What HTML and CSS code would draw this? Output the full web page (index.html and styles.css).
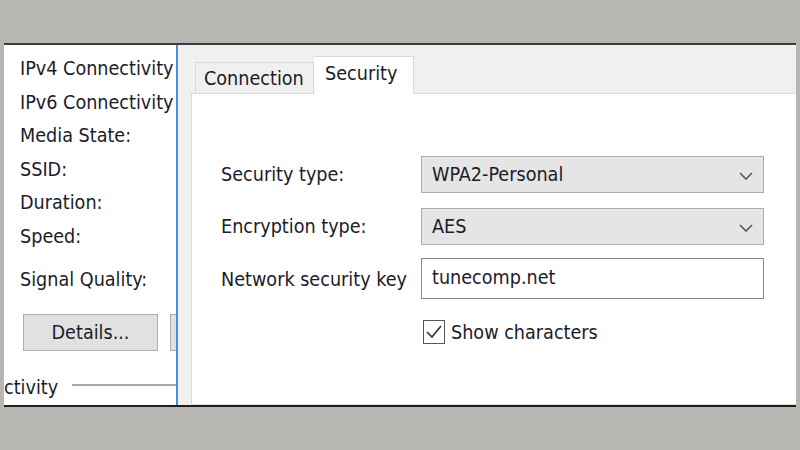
FILE: index.html
```html
<!DOCTYPE html>
<html>
<head>
<meta charset="utf-8">
<link rel="stylesheet" href="styles.css">
</head>
<body>
<div class="frame">
  <div class="left">
    <div class="row">IPv4 Connectivity</div>
    <div class="row">IPv6 Connectivity</div>
    <div class="row">Media State:</div>
    <div class="row">SSID:</div>
    <div class="row">Duration:</div>
    <div class="row">Speed:</div>
    <div class="row signal">Signal Quality:</div>
    <div class="buttons">
      <div class="btn">Details...</div>
      <div class="btn btn2"></div>
    </div>
    <div class="group">
      <span class="gtitle">ctivity</span>
      <span class="gline"></span>
    </div>
  </div>
  <div class="right">
    <div class="tabs">
      <div class="tab">Connection</div>
      <div class="tab active">Security</div>
    </div>
    <div class="panel">
      <div class="form">
        <div class="label">Security type:</div>
        <div class="select"><span>WPA2-Personal</span>
          <svg class="chev" width="14" height="8" viewBox="0 0 14 8"><path d="M1 1 L7 7 L13 1" fill="none" stroke="#555" stroke-width="1.6"/></svg>
        </div>
        <div class="label">Encryption type:</div>
        <div class="select"><span>AES</span>
          <svg class="chev" width="14" height="8" viewBox="0 0 14 8"><path d="M1 1 L7 7 L13 1" fill="none" stroke="#555" stroke-width="1.6"/></svg>
        </div>
        <div class="label">Network security key</div>
        <div class="textbox">tunecomp.net</div>
        <div></div>
        <div class="check">
          <span class="box"><svg width="20" height="20" viewBox="0 0 20 20"><path d="M3 10 L8 15 L17 4" fill="none" stroke="#333" stroke-width="1.6"/></svg></span>
          <span>Show characters</span>
        </div>
      </div>
    </div>
  </div>
</div>
</body>
</html>
```
FILE: styles.css
```css
html, body {
  margin: 0;
  padding: 0;
  background: #b8b6b2;
  font-family: "DejaVu Sans Condensed", "DejaVu Sans", sans-serif;
  font-size: 19.6px;
  color: #1c1c2a;
}
.frame {
  margin: 43px 0 0 4px;
  width: 792px;
  height: 360px;
  border-top: 2px solid #3e3e3e;
  border-bottom: 2px solid #1e1e1e;
  display: flex;
  background: #f0f0f0;
}
.left {
  width: 172px;
  background: #fff;
  border-right: 2px solid #4a90d9;
  overflow: hidden;
  padding-top: 7px;
  box-sizing: content-box;
  white-space: nowrap;
}
.row {
  height: 33.5px;
  line-height: 33.5px;
  padding-left: 16px;
}
.row.signal {
  margin-top: 10px;
}
.buttons {
  display: flex;
  margin-top: 17px;
  padding-left: 19px;
  gap: 12px;
}
.btn {
  width: 133px;
  height: 35px;
  line-height: 35px;
  text-align: center;
  background: #e1e1e1;
  border: 1px solid #adadad;
  flex: none;
}
.btn2 {
  width: 60px;
}
.group {
  display: flex;
  align-items: center;
  margin-top: 26px;
  height: 22px;
}
.gline {
  flex: 1;
  margin-left: 14px;
  height: 0;
  border-top: 2px solid #a8a8a8;
  margin-top: -6px;
}
.right {
  flex: 1;
  padding: 12px 0 0 13px;
  display: flex;
  flex-direction: column;
}
.tabs {
  display: flex;
  align-items: flex-end;
  padding-left: 4px;
  height: 36px;
  position: relative;
  z-index: 1;
}
.tab {
  height: 30px;
  line-height: 32px;
  padding: 0 8px;
  border: 1px solid #d9d9d9;
  border-bottom: none;
  background: #f0f0f0;
  width: 101px;
  box-sizing: content-box;
  text-align: left;
  white-space: nowrap;
}
.tab.active {
  height: 37px;
  line-height: 34px;
  background: #fff;
  width: 82px;
  padding: 0 6px 0 11px;
  border-left: none;
  margin-bottom: -1px;
}
.panel {
  flex: 1;
  background: #fff;
  border: 1px solid #d9d9d9;
  border-right: 1px solid #fafafa;
  padding: 62px 0 0 29px;
}
.form {
  display: grid;
  grid-template-columns: 200px 343px;
  row-gap: 15px;
  align-items: center;
  white-space: nowrap;
}
.select {
  height: 35px;
  background: #e5e5e5;
  border: 1px solid #adadad;
  display: flex;
  align-items: center;
  justify-content: space-between;
  padding: 0 10px 0 10px;
}
.chev {
  margin-top: 2px;
}
.textbox {
  line-height: 37px;
  border: 1px solid #8a8a8a;
  background: #fff;
  padding-left: 10px;
  box-sizing: border-box;
  height: 41px;
  margin-top: -2px;
}
.check {
  display: flex;
  align-items: center;
  margin-top: 6px;
  margin-left: 2px;
}
.box {
  width: 20px;
  height: 22px;
  border: 1px solid #555;
  display: inline-flex;
  align-items: center;
  justify-content: center;
  margin-right: 6px;
  background: #fff;
}
```
